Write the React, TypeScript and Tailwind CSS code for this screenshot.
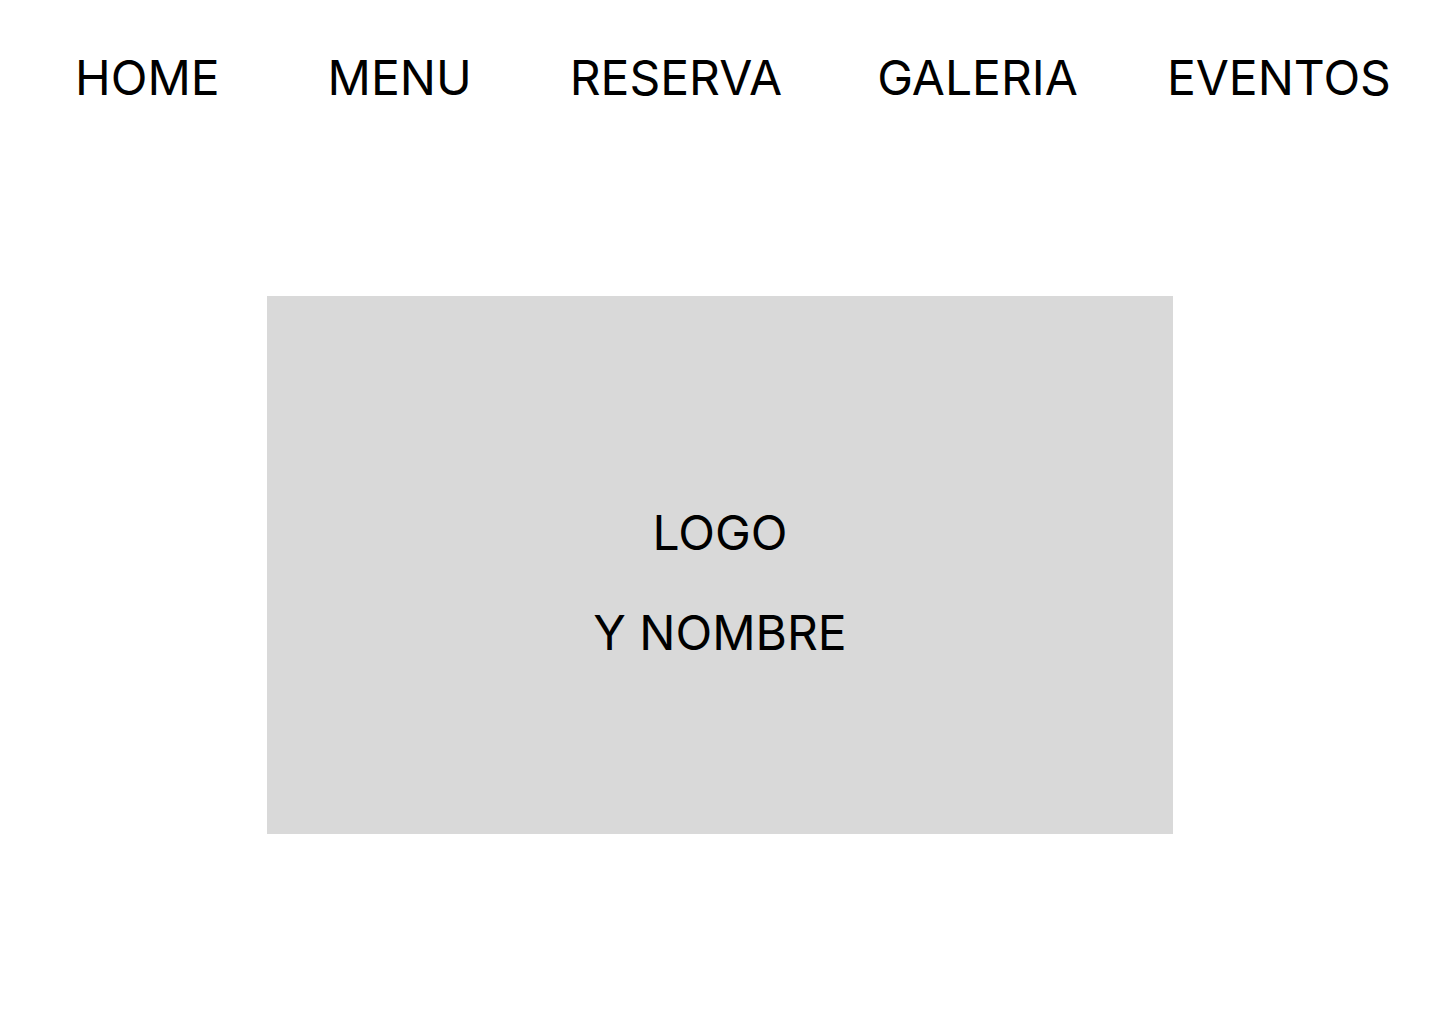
import React from 'react';

const navItems = [
  { label: 'HOME', spacing: '' },
  { label: 'MENU', spacing: 'ml-[108px]' },
  { label: 'RESERVA', spacing: 'ml-[98px]' },
  { label: 'GALERIA', spacing: 'ml-[95px]' },
  { label: 'EVENTOS', spacing: 'ml-[89px]' },
];

const App: React.FC = () => {
  return (
    <div className="min-h-[1024px] w-full bg-white text-black font-['Inter',sans-serif]">
      <nav className="flex items-start pl-[75px] pt-[49px]">
        {navItems.map((item) => (
          <a
            key={item.label}
            href="#"
            className={`${item.spacing} text-[48px] leading-[58px] font-normal text-black`}
          >
            {item.label}
          </a>
        ))}
      </nav>

      <section className="flex justify-center mt-[189px]">
        <div className="w-[906px] h-[538px] bg-[#d9d9d9] flex flex-col items-center pt-[187px]">
          <p className="text-[48px] leading-[100px]">LOGO</p>
          <p className="text-[48px] leading-[100px]">Y NOMBRE</p>
        </div>
      </section>
    </div>
  );
};

export default App;
